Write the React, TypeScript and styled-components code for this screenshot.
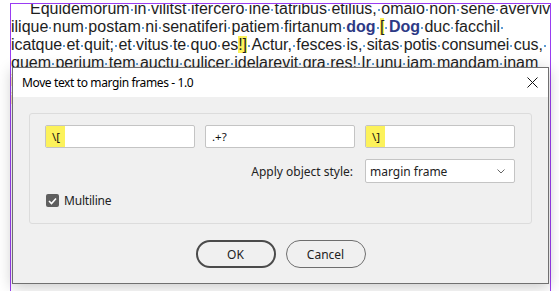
import React from "react";
import styled, { createGlobalStyle } from "styled-components";

const GlobalStyle = createGlobalStyle`
  html, body {
    margin: 0;
    padding: 0;
    background: #fff;
  }
  body {
    width: 559px;
    height: 291px;
    overflow: hidden;
  }
`;

const Stage = styled.div`
  position: relative;
  width: 559px;
  height: 291px;
  overflow: hidden;
  background: #fff;
  padding: 3px 0 0 10px;
  box-sizing: border-box;
`;

const TextFrame = styled.div`
  width: 541px;
  height: 300px;
  box-sizing: border-box;
  border: 1px solid #9a3cf2;
  border-bottom: none;
  overflow: hidden;
  font-family: "Liberation Sans", Arial, sans-serif;
  font-size: 16px;
  line-height: 18px;
  color: #1e1e1e;
`;

const Story = styled.div`
  margin-top: -4px;
`;

const Line = styled.div<{ $indent?: number; $tight?: boolean }>`
  white-space: nowrap;
  padding-left: ${(p) => p.$indent ?? 0}px;
  letter-spacing: ${(p) => (p.$tight ? "-0.08px" : "0")};
`;

const Dot = styled.span`
  display: inline-block;
  width: 0.278em;
  height: 0.5em;
  background: radial-gradient(circle, #5b9bd5 0.8px, transparent 1.3px) center / 100% 100% no-repeat;
`;

const Bold = styled.span`
  font-weight: bold;
  color: #2d3a86;
`;

const Hl = styled.span`
  background: #fcf25b;
`;

const Dialog = styled.div`
  position: absolute;
  left: 12px;
  top: 67px;
  width: 537px;
  height: 217px;
  box-sizing: border-box;
  border: 1px solid #707070;
  background: #f0f0f0;
  box-shadow: 0 3px 14px rgba(0, 0, 0, 0.22);
  font-family: "Noto Sans", "Open Sans", sans-serif;
  font-size: 12px;
  color: #1b1b1b;
`;

const TitleBar = styled.div`
  height: 29px;
  background: #fff;
  display: flex;
  align-items: center;
  justify-content: space-between;
  padding: 0 10px 0 9px;
`;

const Title = styled.span`
  color: #000;
  letter-spacing: -0.38px;
`;

const CloseBtn = styled.button`
  border: none;
  background: none;
  padding: 0;
  width: 12px;
  height: 12px;
  display: flex;
  align-items: center;
  justify-content: center;
`;

const Body = styled.div`
  padding: 16px 16px 0 16px;
`;

const Panel = styled.div`
  height: 111px;
  box-sizing: border-box;
  border: 1px solid #dcdcdc;
  border-radius: 3px;
  padding: 11px 15px;
  display: grid;
  grid-template-columns: repeat(3, 150px);
  grid-template-rows: 23px 24px 13px;
  column-gap: 10px;
  row-gap: 11px;
`;

const Field = styled.div`
  box-sizing: border-box;
  border: 1px solid #c4c4c4;
  border-radius: 2px;
  background: #fff;
  display: flex;
  align-items: stretch;
  overflow: hidden;
`;

const FieldText = styled.span<{ $mark?: boolean }>`
  display: flex;
  align-items: center;
  padding: 0 ${(p) => (p.$mark ? "5px" : "0")} 0 6px;
  background: ${(p) => (p.$mark ? "#fcf25b" : "transparent")};
  color: #111;
  font-size: 11.5px;
`;

const Label = styled.span`
  grid-column: 1 / 3;
  justify-self: end;
  align-self: center;
  margin-right: 2px;
  color: #222;
`;

const Select = styled.div`
  box-sizing: border-box;
  border: 1px solid #c4c4c4;
  border-radius: 2px;
  background: #fff;
  display: flex;
  align-items: center;
  justify-content: space-between;
  padding: 0 9px 0 4px;
  color: #222;
`;

const CheckRow = styled.label`
  grid-column: 1 / -1;
  display: flex;
  align-items: center;
  gap: 5px;
  padding-left: 1px;
  color: #222;
  letter-spacing: -0.2px;
`;

const CheckBox = styled.span`
  width: 13px;
  height: 13px;
  border-radius: 2px;
  background: #5f5f5f;
  display: flex;
  align-items: center;
  justify-content: center;
`;

const Buttons = styled.div`
  margin-top: 16px;
  display: flex;
  justify-content: center;
  gap: 10px;
`;

const Button = styled.button<{ $primary?: boolean }>`
  width: 80px;
  height: 28px;
  box-sizing: border-box;
  border-radius: 14px;
  border: ${(p) => (p.$primary ? "2px solid #4b4b4b" : "1px solid #6e6e6e")};
  background: transparent;
  font-family: inherit;
  font-size: 12px;
  color: #222;
  padding: 0;
`;

const words = (text: string) =>
  text.split(" ").map((w, i) => (
    <React.Fragment key={i}>
      {i > 0 && <Dot />}
      {w}
    </React.Fragment>
  ));

export default function App() {
  return (
    <>
      <GlobalStyle />
      <Stage>
        <TextFrame>
          <Story>
            <Line $indent={19}>
              {words("Equidemorum in vilitst ifercero ine tatribus etilius, omaio non sene averviv")}
            </Line>
            <Line>
              {words("ilique num postam ni senatiferi patiem firtanum")}
              <Dot />
              <Bold>dog</Bold>
              <Dot />
              <Hl>[</Hl>
              <Dot />
              <Bold>Dog</Bold>
              <Dot />
              {words("duc facchil")}
              <Dot />
            </Line>
            <Line $tight>
              {words("icatque et quit; et vitus te quo es")}
              <Hl>!]</Hl>
              <Dot />
              {words("Actur, fesces is, sitas potis consumei cus,")}
              <Dot />
            </Line>
            <Line>{words("quem perium tem auctu culicer idelarevit gra res! Ir unu iam mandam inam")}</Line>
            <Line>{words("ibus ressim di inatque vit, que ia res hoc, con ve, nonsus")}</Line>
            <Line>{words("ilicae confirm ihilica temus hos ciam ommo ex nostrum")}</Line>
          </Story>
        </TextFrame>

        <Dialog>
          <TitleBar>
            <Title>Move text to margin frames - 1.0</Title>
            <CloseBtn aria-label="Close">
              <svg width="11" height="11" viewBox="0 0 11 11">
                <path d="M0.5 0.5 L10.5 10.5 M10.5 0.5 L0.5 10.5" stroke="#111" strokeWidth="1" />
              </svg>
            </CloseBtn>
          </TitleBar>
          <Body>
            <Panel>
              <Field>
                <FieldText $mark>\[</FieldText>
              </Field>
              <Field>
                <FieldText>.+?</FieldText>
              </Field>
              <Field>
                <FieldText $mark>\]</FieldText>
              </Field>
              <Label>Apply object style:</Label>
              <Select>
                <span>margin frame</span>
                <svg width="8" height="5" viewBox="0 0 8 5">
                  <path d="M0.5 0.5 L4 4 L7.5 0.5" fill="none" stroke="#666" strokeWidth="1" />
                </svg>
              </Select>
              <CheckRow>
                <CheckBox>
                  <svg width="9" height="8" viewBox="0 0 9 8">
                    <path d="M1 4 L3.5 6.5 L8 1.5" fill="none" stroke="#fff" strokeWidth="1.6" />
                  </svg>
                </CheckBox>
                Multiline
              </CheckRow>
            </Panel>
            <Buttons>
              <Button $primary>OK</Button>
              <Button>Cancel</Button>
            </Buttons>
          </Body>
        </Dialog>
      </Stage>
    </>
  );
}
